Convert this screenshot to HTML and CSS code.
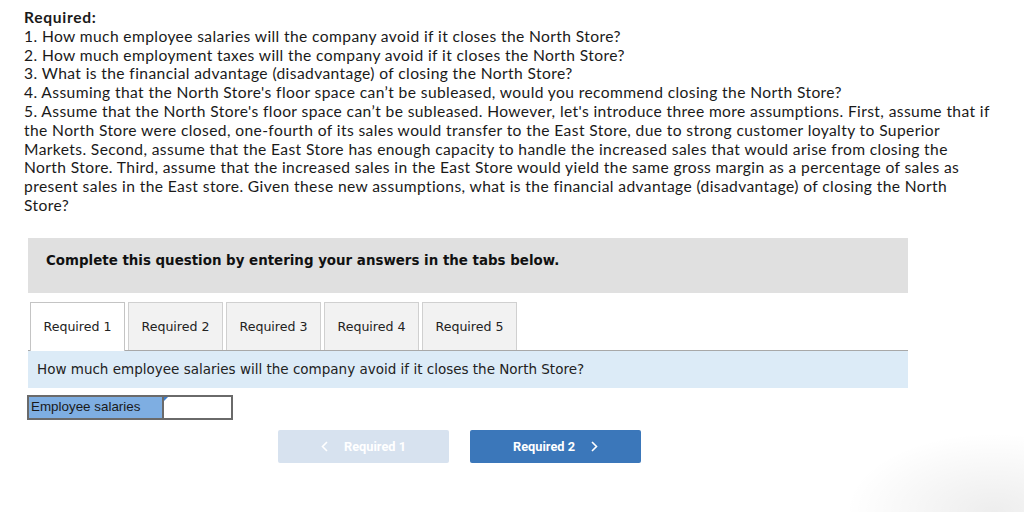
FILE: index.html
```html
<!DOCTYPE html>
<html>
<head>
<meta charset="utf-8">
<link rel="stylesheet" href="styles.css">
</head>
<body>
<div class="page">
<div class="prompt">
  <div class="req-title">Required:</div>
  <div>1. How much employee salaries will the company avoid if it closes the North Store?</div>
  <div>2. How much employment taxes will the company avoid if it closes the North Store?</div>
  <div>3. What is the financial advantage (disadvantage) of closing the North Store?</div>
  <div>4. Assuming that the North Store's floor space can’t be subleased, would you recommend closing the North Store?</div>
  <div class="long">5. Assume that the North Store's floor space can’t be subleased. However, let's introduce three more assumptions. First, assume that if<br>the North Store were closed, one-fourth of its sales would transfer to the East Store, due to strong customer loyalty to Superior<br>Markets. Second, assume that the East Store has enough capacity to handle the increased sales that would arise from closing the<br>North Store. Third, assume that the increased sales in the East Store would yield the same gross margin as a percentage of sales as<br>present sales in the East store. Given these new assumptions, what is the financial advantage (disadvantage) of closing the North<br>Store?</div>
</div>

<div class="work">
  <div class="instructions">Complete this question by entering your answers in the tabs below.</div>

  <div class="tabs">
    <div class="tab active">Required 1</div>
    <div class="tab">Required 2</div>
    <div class="tab">Required 3</div>
    <div class="tab">Required 4</div>
    <div class="tab">Required 5</div>
  </div>

  <div class="question">How much employee salaries will the company avoid if it closes the North Store?</div>

  <div class="answer-row">
    <div class="answer-label">Employee salaries</div>
    <div class="answer-input"><span class="marker"></span></div>
  </div>

  <div class="nav">
    <div class="btn prev"><svg class="chev" width="7" height="11" viewBox="0 0 7 11"><path d="M6 1 L1.5 5.5 L6 10" fill="none" stroke="#fff" stroke-width="1.6"/></svg>Required 1</div>
    <div class="btn next">Required 2<svg class="chev" width="7" height="11" viewBox="0 0 7 11"><path d="M1 1 L5.5 5.5 L1 10" fill="none" stroke="#fff" stroke-width="1.6"/></svg></div>
  </div>
</div>
<div class="corner-shade"></div>
</div>
</body>
</html>
```

FILE: styles.css
```css
html, body {
  margin: 0;
  padding: 0;
  background: #fff;
}
.page {
  position: relative;
  width: 1024px;
  height: 512px;
  overflow: hidden;
}
.prompt {
  padding: 8px 10px 0 24px;
  font-family: Lato, "Open Sans", sans-serif;
  font-size: 15.6px;
  letter-spacing: 0.39px;
  line-height: 18.8px;
  color: #1a1a1a;
}
.req-title {
  font-weight: 700;
  letter-spacing: 0.7px;
}
.long {
  white-space: nowrap;
}
.work {
  margin: 23px 0 0 28px;
  width: 880px;
}
.instructions {
  background: #e0e0e0;
  height: 55px;
  box-sizing: border-box;
  padding: 15px 0 0 18px;
  font-family: "DejaVu Sans", Verdana, sans-serif;
  font-weight: 700;
  font-size: 13.4px;
  color: #111;
}
.tabs {
  display: flex;
  gap: 3px;
  margin-top: 9px;
  padding-left: 2px;
  border-bottom: 1px solid #a8a8a8;
}
.tab {
  width: 95px;
  height: 48px;
  box-sizing: border-box;
  display: flex;
  align-items: center;
  justify-content: center;
  background: #f2f2f2;
  border: 1px solid #d0d0d0;
  border-bottom: none;
  font-family: "DejaVu Sans", Verdana, sans-serif;
  font-size: 12.6px;
  color: #222;
}
.tab.active {
  background: #fff;
  border-color: #c4c4c4;
  height: 49px;
  margin-bottom: -1px;
}
.question {
  background: #dcebf7;
  height: 37px;
  box-sizing: border-box;
  padding: 10px 0 0 9px;
  font-family: "DejaVu Sans", Verdana, sans-serif;
  font-size: 13.5px;
  color: #222;
}
.answer-row {
  display: flex;
  margin: 7px 0 0 -1px;
  height: 25px;
}
.answer-label {
  width: 136px;
  box-sizing: border-box;
  background: #7eaee2;
  border: 2px solid #6a6a6a;
  border-right-width: 1px;
  padding: 2px 0 0 2px;
  font-family: "Liberation Sans", Arial, sans-serif;
  font-size: 13.4px;
  color: #1a1a1a;
}
.answer-input {
  position: relative;
  width: 70px;
  box-sizing: border-box;
  background: #fff;
  border: 2px solid #6a6a6a;
  border-left-width: 1px;
}
.marker {
  position: absolute;
  left: 0;
  top: 0;
  width: 0;
  height: 0;
  border-top: 4px solid #3d7cc9;
  border-right: 4px solid transparent;
  border-bottom: 4px solid transparent;
}
.nav {
  display: flex;
  gap: 21px;
  margin: 10px 0 0 250px;
}
.btn {
  width: 171px;
  height: 33px;
  box-sizing: border-box;
  border-radius: 2px;
  display: flex;
  align-items: center;
  justify-content: center;
  font-family: Roboto, "Liberation Sans", sans-serif;
  font-weight: 700;
  font-size: 12.8px;
  color: #fff;
}
.btn.prev {
  background: #d7e2ef;
}
.btn.next {
  background: #3b77ba;
}
.prev .chev {
  margin-right: 16px;
}
.next .chev {
  margin-left: 16px;
}
.corner-shade {
  position: absolute;
  right: -120px;
  bottom: -80px;
  width: 300px;
  height: 160px;
  border-radius: 50%;
  background: radial-gradient(ellipse at center, rgba(0,0,0,0.07), rgba(0,0,0,0) 70%);
  pointer-events: none;
}
```
